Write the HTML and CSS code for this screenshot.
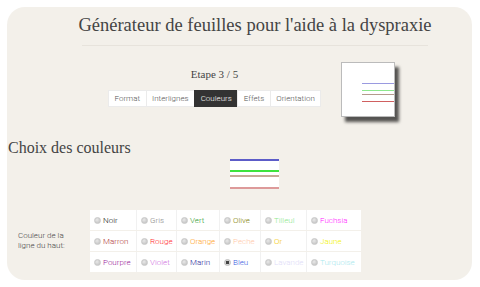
FILE: index.html
```html
<!DOCTYPE html>
<html lang="fr">
<head>
    <meta charset="UTF-8">
    <meta name="viewport" content="width=device-width, initial-scale=1.0">
    <title>Dyspraxie</title>
    <link rel="stylesheet" href="styles.css">
</head>
<body>
    <div class="panel">
        <div class="header">
            <h1>Générateur de feuilles pour l'aide à la dyspraxie</h1>
            <hr>
        </div>

        <div class="steps">
            <div class="step-col">
                <div class="step-label">Etape 3 / 5</div>
                <div class="tabs">
                    <span class="tab">Format</span>
                    <span class="tab">Interlignes</span>
                    <span class="tab active">Couleurs</span>
                    <span class="tab">Effets</span>
                    <span class="tab">Orientation</span>
                </div>
            </div>
            <div class="preview">
                <div class="pline blue"></div>
                <div class="pline green"></div>
                <div class="pline brown"></div>
                <div class="pline red"></div>
            </div>
        </div>

        <h2>Choix des couleurs</h2>

        <div class="sample">
            <div class="sline blue"></div>
            <div class="sline green"></div>
            <div class="sline brown"></div>
            <div class="sline red"></div>
        </div>

        <div class="choice">
            <div class="choice-label">Couleur de la<br>ligne du haut:</div>
            <table class="colors">
                <tr>
                    <td class="c1"><span class="radio"></span><span class="noir">Noir</span></td>
                    <td class="c2"><span class="radio"></span><span class="gris">Gris</span></td>
                    <td class="c3"><span class="radio"></span><span class="vert">Vert</span></td>
                    <td class="c4"><span class="radio"></span><span class="olive">Olive</span></td>
                    <td class="c5"><span class="radio"></span><span class="tilleul">Tilleul</span></td>
                    <td class="c6"><span class="radio"></span><span class="fuchsia">Fuchsia</span></td>
                </tr>
                <tr>
                    <td><span class="radio"></span><span class="marron">Marron</span></td>
                    <td><span class="radio"></span><span class="rouge">Rouge</span></td>
                    <td><span class="radio"></span><span class="orange">Orange</span></td>
                    <td><span class="radio"></span><span class="peche">Peche</span></td>
                    <td><span class="radio"></span><span class="or">Or</span></td>
                    <td><span class="radio"></span><span class="jaune">Jaune</span></td>
                </tr>
                <tr>
                    <td><span class="radio"></span><span class="pourpre">Pourpre</span></td>
                    <td><span class="radio"></span><span class="violet">Violet</span></td>
                    <td><span class="radio"></span><span class="marin">Marin</span></td>
                    <td><span class="radio checked"></span><span class="bleu">Bleu</span></td>
                    <td><span class="radio"></span><span class="lavande">Lavande</span></td>
                    <td><span class="radio"></span><span class="turquoise">Turquoise</span></td>
                </tr>
            </table>
        </div>
    </div>
</body>
</html>
```

FILE: styles.css
```css
body {
    margin: 0;
    background: #ffffff;
    font-family: Roboto, "Liberation Sans", sans-serif;
    font-weight: 300;
}

.panel {
    margin: 7px 8px 0 7px;
    height: 273px;
    background: #f3f0ea;
    border-radius: 18px;
    overflow: hidden;
}

/* Title */
.header {
    width: 346px;
    margin-left: 75px;
    padding-top: 7px;
}
h1 {
    margin: 0 -10px;
    font-family: "Liberation Serif", serif;
    font-weight: normal;
    font-size: 18.5px;
    line-height: 22px;
    color: #444;
    text-align: center;
    white-space: nowrap;
}
hr {
    margin: 9px 0 0 0;
    border: none;
    border-top: 1px solid #e7e3dc;
}

/* Steps */
.steps {
    display: flex;
    margin-top: 16px;
    padding-left: 101px;
}
.step-col {
    width: 213px;
    text-align: center;
}
.step-label {
    margin-top: 6px;
    font-family: "Liberation Serif", serif;
    font-weight: normal;
    font-size: 11px;
    line-height: 12px;
    color: #444;
}
.tabs {
    display: flex;
    margin-top: 10px;
    height: 17px;
}
.tab {
    background: #fff;
    border: 1px solid #ebebeb;
    border-right: none;
    padding: 0 5.5px;
    font-size: 8px;
    line-height: 15px;
    color: #555;
}
.tab:last-child {
    border-right: 1px solid #ebebeb;
}
.tab.active {
    background: #333;
    border-color: #333;
    color: #fff;
}

.preview {
    margin-left: 20px;
    background: #fff;
    border: 1px solid #bbb;
    box-shadow: 4px 5px 3px rgba(0, 0, 0, 0.65);
    padding: 20px 0 0 20px;
    width: 32px;
    height: 33px;
}
.pline {
    height: 1px;
}
.pline.green { margin-top: 6px; }
.pline.brown { margin-top: 3px; }
.pline.red { margin-top: 6px; }
.pline.blue { background: #9a9ae0; }
.pline.green { background: #8ee88e; }
.pline.brown { background: #b49a8c; }
.pline.red { background: #d06060; }

/* Colors */
h2 {
    margin: 22px 0 0 1px;
    font-family: "Liberation Serif", serif;
    font-weight: normal;
    font-size: 16px;
    line-height: 18px;
    color: #444;
}

.sample {
    width: 49px;
    margin: 2px 0 0 223px;
    background: #fff;
}
.sline {
    height: 2px;
}
.sline.blue { background: #5c5cc8; }
.sline.green { background: #3de33d; margin-top: 9px; }
.sline.brown { background: #c6aa98; margin-top: 3px; }
.sline.red { background: #dd9a9a; margin-top: 10px; }

.choice {
    display: flex;
    align-items: center;
    margin-top: 20px;
    padding-left: 11px;
}
.choice-label {
    width: 72px;
    font-size: 8px;
    line-height: 10px;
    color: #444;
}
.colors {
    border-collapse: separate;
    border-spacing: 0 1px;
    font-size: 8px;
}
.colors td {
    height: 20px;
    padding: 0 0 0 4px;
    background: #fff;
    border-left: 1px solid #f1f1f1;
    white-space: nowrap;
}
.colors td:first-child {
    border-left: none;
}
.c1 { width: 42px; }
.c2 { width: 35px; }
.c3 { width: 38px; }
.c4 { width: 36px; }
.c5 { width: 41px; }
.c6 { width: 50px; }

.radio {
    display: inline-block;
    width: 7px;
    height: 7px;
    margin-right: 2px;
    border-radius: 50%;
    background: radial-gradient(circle at 40% 35%, #e8e8e8, #bdbdbd);
    border: 1px solid #c8c8c8;
    box-sizing: border-box;
    vertical-align: -1px;
}
.radio.checked {
    background: radial-gradient(circle, #444 0, #444 1.5px, #d4d4d4 2px);
    border-color: #bbb;
}

.noir { color: #222; }
.gris { color: #888; }
.vert { color: #2e9b2e; }
.olive { color: #808000; }
.tilleul { color: #8ee88e; }
.fuchsia { color: #ff22ff; }
.marron { color: #b03a3a; }
.rouge { color: #ff2a2a; }
.orange { color: #ffa51f; }
.peche { color: #ffc9a8; }
.or { color: #f5c800; }
.jaune { color: #f2f200; }
.pourpre { color: #992299; }
.violet { color: #d070e0; }
.marin { color: #2a2a99; }
.bleu { color: #3a5ae0; }
.lavande { color: #e0dcf8; }
.turquoise { color: #a8e8ee; }
```
